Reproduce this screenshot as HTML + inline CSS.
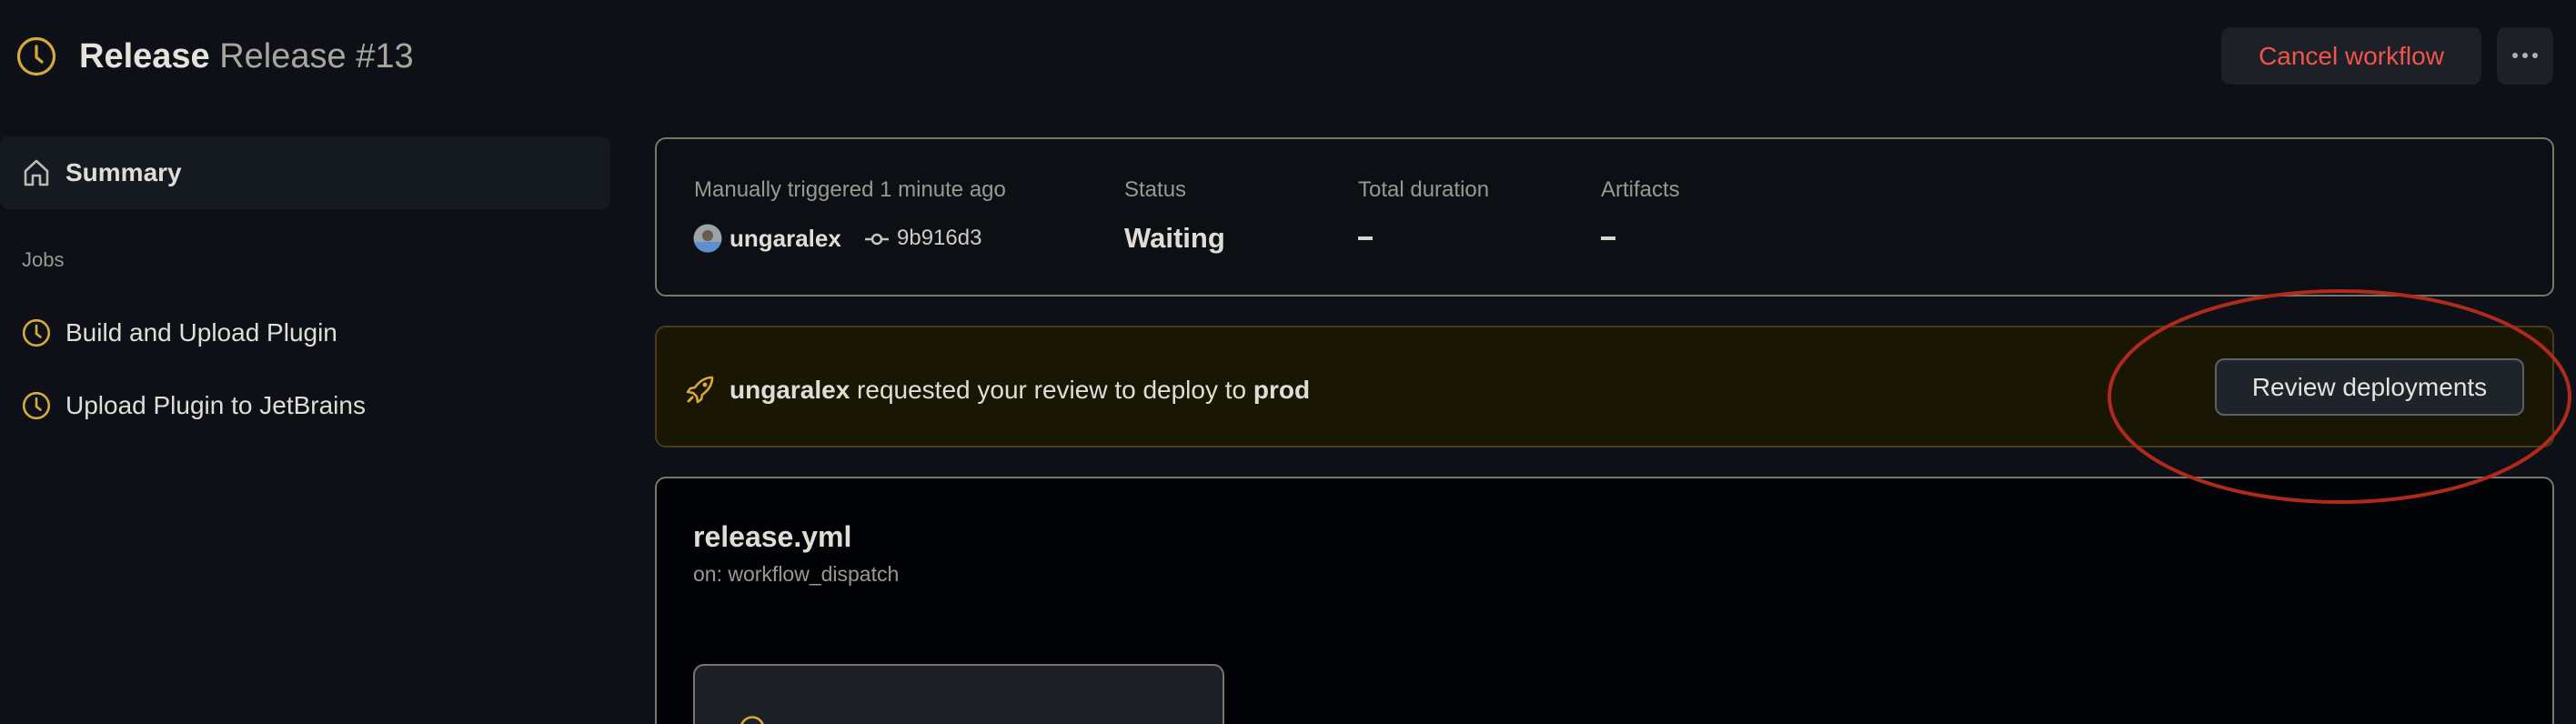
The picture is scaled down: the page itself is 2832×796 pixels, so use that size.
<!DOCTYPE html>
<html><head><meta charset="utf-8"><style>
*{margin:0;padding:0;box-sizing:border-box}
html,body{width:2832px;height:796px;overflow:hidden;background:#0d1117}
body{font-family:"Liberation Sans",Arial,sans-serif;color:#e0ddd6}
#w{position:relative;width:2832px;height:796px;overflow:hidden}
.a{position:absolute;white-space:nowrap}
.muted{color:#9a9891}
.card{position:absolute;border:2px solid #7b766c;border-radius:12px}
.open{border-bottom:none;border-bottom-left-radius:0;border-bottom-right-radius:0}
</style></head><body><div id="w">
<svg class="a" style="left:18px;top:40px" width="44" height="44" viewBox="0 0 44 44"><circle cx="22" cy="22" r="19.5" fill="none" stroke="#d6a93c" stroke-width="3.2"/><path d="M22 11v12l6 5" fill="none" stroke="#d6a93c" stroke-width="3.2" stroke-linecap="round"/></svg>
<div class="a" style="left:87px;top:39px;font-size:38px;line-height:46px"><b style="color:#e6e3dc">Release</b> <span style="color:#a9a69f">Release #13</span></div>

<div class="a" style="left:2442px;top:30px;width:286px;height:63px;background:#1d2127;border-radius:10px;color:#f0544a;font-size:28px;line-height:63px;text-align:center">Cancel workflow</div>
<div class="a" style="left:2745px;top:30px;width:62px;height:63px;background:#1d2127;border-radius:10px"><svg width="62" height="63"><circle cx="20" cy="31" r="3" fill="#b4b1aa"/><circle cx="31" cy="31" r="3" fill="#b4b1aa"/><circle cx="42" cy="31" r="3" fill="#b4b1aa"/></svg></div>

<div class="a" style="left:0;top:150px;width:671px;height:80px;background:#151a21;border-radius:10px"></div>
<svg class="a" style="left:24px;top:174px" width="32" height="32" viewBox="0 0 32 32"><path d="M4 14L16 3l12 11v15H20V19h-8v10H4z" fill="none" stroke="#bdbab3" stroke-width="2.6" stroke-linejoin="round"/></svg>
<div class="a" style="left:72px;top:172px;font-size:28px;line-height:36px;font-weight:bold">Summary</div>
<div class="a muted" style="left:24px;top:272px;font-size:22px;line-height:28px">Jobs</div>
<svg class="a" style="left:24px;top:350px" width="32" height="32" viewBox="0 0 32 32"><circle cx="16" cy="16" r="13.8" fill="none" stroke="#d6a93c" stroke-width="2.6"/><path d="M16 8v9l4.5 3.5" fill="none" stroke="#d6a93c" stroke-width="2.6" stroke-linecap="round"/></svg>
<div class="a" style="left:72px;top:348px;font-size:28px;line-height:36px">Build and Upload Plugin</div>
<svg class="a" style="left:24px;top:430px" width="32" height="32" viewBox="0 0 32 32"><circle cx="16" cy="16" r="13.8" fill="none" stroke="#d6a93c" stroke-width="2.6"/><path d="M16 8v9l4.5 3.5" fill="none" stroke="#d6a93c" stroke-width="2.6" stroke-linecap="round"/></svg>
<div class="a" style="left:72px;top:428px;font-size:28px;line-height:36px">Upload Plugin to JetBrains</div>

<div class="card" style="left:720px;top:151px;width:2088px;height:175px;background:#0c0f14"></div>
<div class="a muted" style="left:763px;top:194px;font-size:24px;line-height:30px">Manually triggered 1 minute ago</div>
<div class="a muted" style="left:1236px;top:194px;font-size:24px;line-height:30px">Status</div>
<div class="a muted" style="left:1493px;top:194px;font-size:24px;line-height:30px">Total duration</div>
<div class="a muted" style="left:1760px;top:194px;font-size:24px;line-height:30px">Artifacts</div>
<svg class="a" style="left:762px;top:246px" width="32" height="32"><defs><clipPath id="c"><circle cx="16" cy="16" r="15.5"/></clipPath></defs><g clip-path="url(#c)"><rect width="32" height="32" fill="#9aa3a8"/><rect y="20" width="32" height="12" fill="#5d8fd1"/><circle cx="16" cy="13" r="6" fill="#6b5a4e"/></g></svg>
<div class="a" style="left:802px;top:245px;font-size:26px;line-height:34px;font-weight:bold">ungaralex</div>
<svg class="a" style="left:950px;top:253px" width="28" height="20" viewBox="0 0 28 20"><circle cx="14" cy="10" r="5" fill="none" stroke="#c8c5be" stroke-width="2.4"/><path d="M1 10h8M19 10h8" stroke="#c8c5be" stroke-width="2.4"/></svg>
<div class="a" style="left:986px;top:246px;font-size:24px;line-height:32px;color:#cfccc5">9b916d3</div>
<div class="a" style="left:1236px;top:242px;font-size:31px;line-height:40px;font-weight:bold">Waiting</div>
<div class="a" style="left:1493px;top:260px;width:16px;height:4px;background:#d8d5ce"></div>
<div class="a" style="left:1760px;top:260px;width:16px;height:4px;background:#d8d5ce"></div>

<div class="card" style="left:720px;top:358px;width:2088px;height:134px;background:#1a1604;border-color:#4a3b1c"></div>
<svg class="a" style="left:753px;top:411px" width="34" height="34" viewBox="0 0 34 34"><path d="M30 4c-8 0-14 4-19 11l-5 1-3 4 6 1 4 4 1 6 4-3 1-5c7-5 11-11 11-19z" fill="none" stroke="#d6a93c" stroke-width="2.6" stroke-linejoin="round"/><circle cx="22" cy="12" r="2.5" fill="#d6a93c"/><path d="M8 26l-4 4" stroke="#d6a93c" stroke-width="3" stroke-linecap="round"/></svg>
<div class="a" style="left:802px;top:411px;font-size:28px;line-height:36px"><b>ungaralex</b> requested your review to deploy to <b>prod</b></div>
<div class="a" style="left:2435px;top:394px;width:340px;height:63px;background:#1f232a;border:2px solid #5b6068;border-radius:10px;font-size:28px;line-height:59px;text-align:center;color:#e6e3dc">Review deployments</div>

<div class="card open" style="left:720px;top:524px;width:2088px;height:272px;background:#020306"></div>
<div class="a" style="left:762px;top:571px;font-size:32px;line-height:38px;font-weight:bold">release.yml</div>
<div class="a muted" style="left:762px;top:616px;font-size:23px;line-height:30px">on: workflow_dispatch</div>
<div class="card open" style="left:762px;top:730px;width:584px;height:66px;background:#1c2026"></div>
<svg class="a" style="left:812px;top:786px" width="30" height="10"><circle cx="15" cy="15" r="12.5" fill="none" stroke="#d6a93c" stroke-width="2.6"/></svg>

<svg class="a" style="left:2314px;top:316px" width="516" height="240"><ellipse cx="258" cy="120" rx="253" ry="116" fill="none" stroke="#b02a1b" stroke-width="4"/></svg>
</div></body></html>
